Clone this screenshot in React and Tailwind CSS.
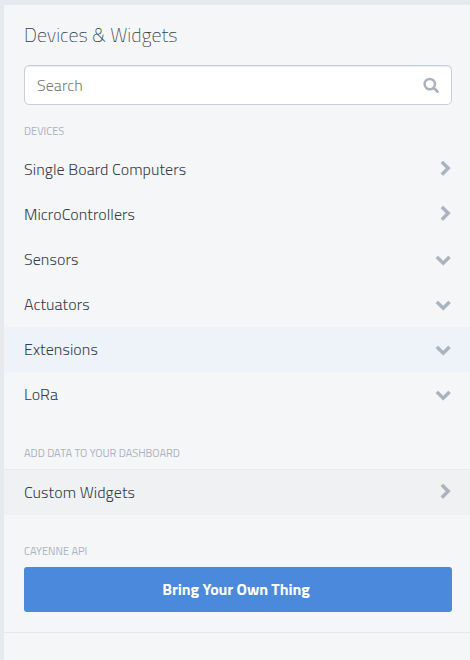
import React from "react";

function Chevron({ down }) {
  return down ? (
    <svg
      className="mt-[1.6px] mr-[1.6px] h-[9.25px] w-[14.4px] overflow-visible"
      viewBox="0 0 1612 1036"
      fill="#a9b3c0"
      stroke="#a9b3c0"
      strokeWidth="40"
    >
      <g transform="translate(1612 0) rotate(90)">
        <path d="M1017 851l-742 742q-19 19-45 19t-45-19l-166-166q-19-19-19-45t19-45l531-531-531-531q-19-19-19-45t19-45l166-166q19-19 45-19t45 19l742 742q19 19 19 45t-19 45z" />
      </g>
    </svg>
  ) : (
    <svg
      className="mr-[2px] mb-[2px] h-[14.4px] w-[9.25px] overflow-visible"
      viewBox="0 0 1036 1612"
      fill="#a9b3c0"
      stroke="#a9b3c0"
      strokeWidth="40"
    >
      <path d="M1017 851l-742 742q-19 19-45 19t-45-19l-166-166q-19-19-19-45t19-45l531-531-531-531q-19-19-19-45t19-45l166-166q19-19 45-19t45 19l742 742q19 19 19 45t-19 45z" />
    </svg>
  );
}

function Row({ label, down, className = "" }) {
  return (
    <button className={`flex h-[45px] w-full items-center justify-between pr-[18px] pl-5 ${className}`}>
      <span className="pb-0.5 text-base font-light tracking-[0.07px] whitespace-nowrap text-[#363e4a]">
        {label}
      </span>
      <Chevron down={down} />
    </button>
  );
}

function Heading({ children, className }) {
  return (
    <h2 className={`px-5 text-[11px] leading-4 font-normal whitespace-nowrap text-[#aab2bd] uppercase ${className}`}>
      {children}
    </h2>
  );
}

export default function App() {
  return (
    <div className="h-[660px] w-[470px] overflow-hidden bg-[#e6e9ee] pt-[5px] pl-1 font-['Titillium_Web',Roboto,sans-serif]">
      <main className="flex h-full flex-col bg-[#f4f6f8]">
        <h1 className="mt-[15px] px-5 text-[20px] leading-[30px] font-extralight text-[#353d49]">
          Devices &amp; Widgets
        </h1>
        <div className="mt-[15px] mr-[18px] ml-5 flex h-10 shrink-0 items-center justify-between rounded-[5px] border border-[#caced8] bg-white pr-3 pl-3 shadow-[inset_0_1px_1px_rgba(0,0,0,0.075)]">
          <input
            className="w-60 bg-transparent text-base font-light tracking-[0.06px] text-[#555] outline-none placeholder:text-[#7a7a7a]"
            placeholder="Search"
          />
          <svg width="16" height="16" viewBox="0 0 16 16" fill="none" stroke="#a9b3c0">
            <circle cx="6.8" cy="7.1" r="5.2" strokeWidth="2.5" />
            <path d="M10.8 11L14.4 14.5" strokeWidth="2.8" strokeLinecap="round" />
          </svg>
        </div>
        <Heading className="mt-[18px]">Devices</Heading>
        <nav className="mt-2">
          <Row label="Single Board Computers" />
          <Row label="MicroControllers" />
          <Row label="Sensors" down />
          <Row label="Actuators" down />
          <Row label="Extensions" down className="bg-[#edf3f8]" />
          <Row label="LoRa" down />
        </nav>
        <Heading className="mt-7">Add data to your dashboard</Heading>
        <div className="mt-2 border-t border-[#e9ebed] bg-[#eff1f2]">
          <Row label="Custom Widgets" />
        </div>
        <Heading className="mt-7">Cayenne API</Heading>
        <button className="mt-2 mr-[18px] ml-5 h-[45px] shrink-0 rounded-[3px] bg-[#4a89dc] pr-1 pb-0.5 text-base font-bold tracking-[-0.1px] text-white">
          Bring Your Own Thing
        </button>
        <hr className="mt-5 border-t border-[#e6e9ec]" />
      </main>
    </div>
  );
}
